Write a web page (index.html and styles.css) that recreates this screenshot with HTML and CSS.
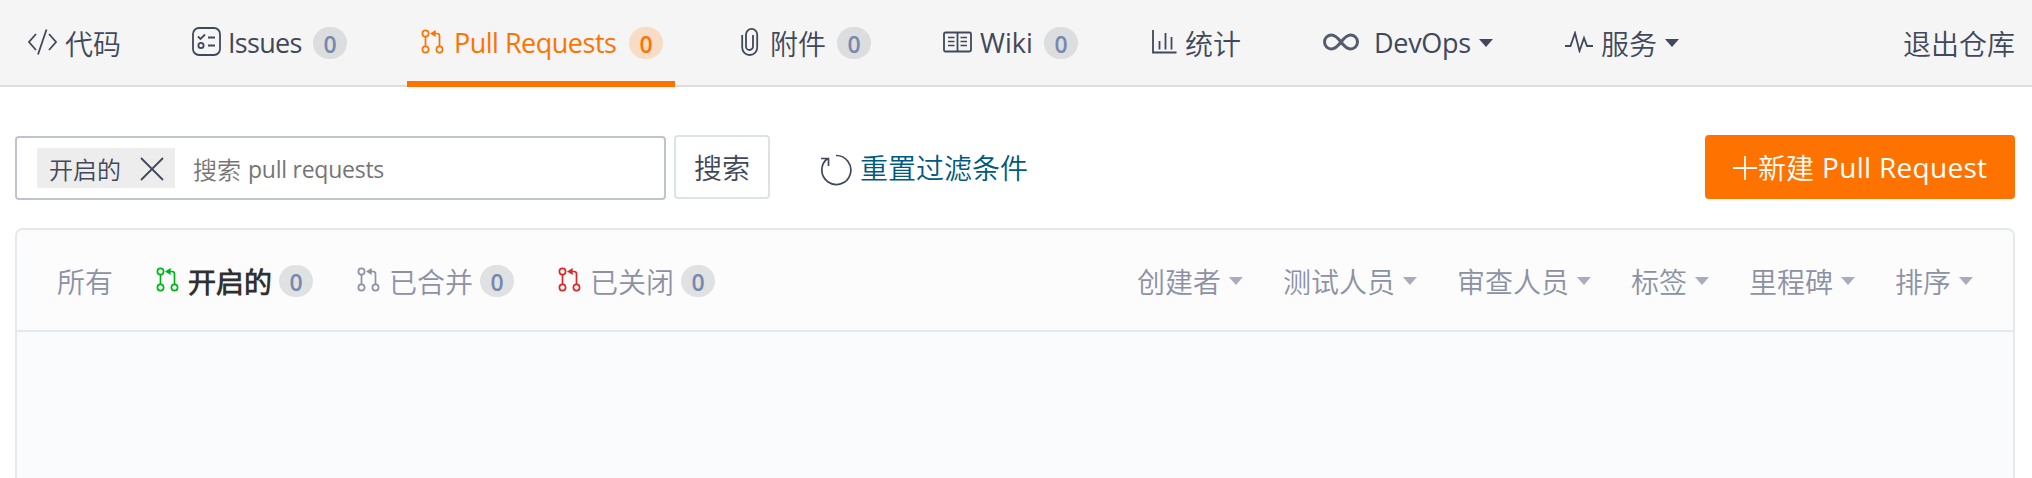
FILE: index.html
```html
<!DOCTYPE html>
<html lang="zh-CN">
<head>
<meta charset="utf-8">
<title>Pull Requests</title>
<link rel="stylesheet" href="styles.css">
</head>
<body>
<svg class="defs" width="0" height="0">
  <symbol id="pr" viewBox="0 0 24 26">
    <g fill="none" stroke="currentColor" stroke-width="1.7"><circle cx="4.5" cy="4.5" r="3.1"/><circle cx="4.5" cy="20.5" r="3.1"/><circle cx="18.5" cy="20.5" r="3.1"/><path d="M4.500 7.600V17.400M18.500 17.400V7Q18.500 4.500 16 4.500H12"/></g>
    <path d="M9 4.500L14.700 1V8Z" fill="currentColor"/>
  </symbol>
</svg>
<nav class="nav">
  <a class="item code"><svg width="29" height="28" viewBox="0 0 29 28"><path d="M8 6L1 14L8 22M21 6L28 14L21 22M18.500 1.500L10 26.500"/></svg><span>代码</span></a>
  <a class="item issues"><svg width="29" height="29" viewBox="0 0 29 29"><rect x="1" y="1" width="27" height="27" rx="6"/><path d="M6 9.500L8.500 12L13 7.500M16 10.500H23M16 18.500H23"/><circle cx="9" cy="18.500" r="2.600"/></svg><span class="latin w-issues">Issues</span><b class="badge">0</b></a>
  <a class="item pulls active"><svg class="pr" width="24" height="26"><use href="#pr"/></svg><span class="latin w-pulls">Pull Requests</span><b class="badge">0</b></a>
  <a class="item files"><svg width="18" height="29" viewBox="0 0 18 29"><path d="M1.200 8V20.500A7.500 7.500 0 0 0 16.200 20.500V7.500A5.600 5.600 0 0 0 5 7.500V19.500A3.500 3.500 0 0 0 12 19.500V8"/></svg><span>附件</span><b class="badge">0</b></a>
  <a class="item wiki"><svg width="29" height="22" viewBox="0 0 29 22"><rect x="1" y="1.500" width="27" height="19" rx="1.500"/><path d="M14.500 2V20"/><path class="thin" d="M5 6.500H11.500M5 10.500H11.500M5 14.500H11.500M17.500 6.500H24M17.500 10.500H24M17.500 14.500H24"/></svg><span class="latin w-wiki">Wiki</span><b class="badge">0</b></a>
  <a class="item stats"><svg width="25" height="25" viewBox="0 0 25 25"><path d="M1 1V23.500H24.500M7.500 20.500V12M13.500 20.500V4M19.500 20.500V8"/></svg><span>统计</span></a>
  <a class="item devops"><svg class="infinity" width="36" height="18" viewBox="0 0 36 18"><path d="M18 9C14.500 4.500 12 2 8.500 2A7 7 0 0 0 8.500 16C12 16 14.500 13.500 18 9S24 2 27.500 2A7 7 0 0 1 27.500 16C24 16 21.500 13.500 18 9Z"/></svg><span class="latin w-devops">DevOps</span><i class="caret"></i></a>
  <a class="item service"><svg width="28" height="22" viewBox="0 0 28 22"><path d="M0 15H5.500L10 2L14.500 20L19 7L22 15H28"/></svg><span>服务</span><i class="caret"></i></a>
  <a class="item leave">退出仓库</a>
</nav>

<main>
  <div class="toolbar">
    <div class="search">
      <span class="tag">开启的<svg width="24" height="24" viewBox="0 0 24 24"><path d="M1 1L23 23M23 1L1 23"/></svg></span>
      <span class="placeholder">搜索 <span class="latin w-ph">pull requests</span></span>
    </div>
    <button class="btn">搜索</button>
    <a class="reset"><svg width="32" height="32" viewBox="0 0 32 32"><path d="M16 1.500A14.500 14.500 0 1 1 7.500 4.500M1 4.500H8.500V12"/></svg><span>重置过滤条件</span></a>
    <button class="create"><svg width="26" height="26" viewBox="0 0 26 26"><path d="M1 13H25M13 1V25"/></svg><span>新建</span><span class="latin w-create">Pull Request</span></button>
  </div>

  <section class="panel">
    <header class="filters">
      <div class="states">
        <a class="all">所有</a>
        <a class="state open"><svg class="pr green" width="24" height="26"><use href="#pr"/></svg><span>开启的</span><b class="badge">0</b></a>
        <a class="state"><svg class="pr" width="24" height="26"><use href="#pr"/></svg><span>已合并</span><b class="badge">0</b></a>
        <a class="state"><svg class="pr red" width="24" height="26"><use href="#pr"/></svg><span>已关闭</span><b class="badge">0</b></a>
      </div>
      <div class="menus">
        <a>创建者<i class="caret"></i></a>
        <a>测试人员<i class="caret"></i></a>
        <a>审查人员<i class="caret"></i></a>
        <a>标签<i class="caret"></i></a>
        <a>里程碑<i class="caret"></i></a>
        <a>排序<i class="caret"></i></a>
      </div>
    </header>
  </section>
</main>
</body>
</html>
```
FILE: styles.css
```css
* { box-sizing: border-box; }
body {
  margin: 0;
  height: 478px;
  overflow: hidden;
  display: flex;
  flex-direction: column;
  background: #fff;
  color: #40485b;
  font: 350 28px/40px "Noto Sans CJK SC DemiLight", "Noto Sans CJK SC", sans-serif;
  white-space: nowrap;
}
.defs { position: absolute; }
svg { flex: none; fill: none; stroke: currentColor; stroke-width: 1.8; }
.pr { stroke: none; }
.latin { font-family: "Open Sans", "Noto Sans CJK SC", sans-serif; font-size: 27px; font-weight: 400; letter-spacing: -0.5px; }

.nav {
  flex: none;
  height: 87px;
  display: flex;
  background: #f5f5f5;
  border-bottom: 2px solid #dcdddd;
}
.item { height: 87px; padding-bottom: 1px; display: flex; align-items: center; flex: none; }
.item svg { margin-bottom: 3px; }
.code { width: 164px; margin-left: 28px; gap: 8px; }
.issues { width: 215px; gap: 7px; }
.pulls { width: 268px; padding-left: 14px; gap: 9px; }
.pulls.active { color: #fe7300; border-bottom: 6px solid #fe7300; padding-bottom: 0; }
.pulls.active > * { position: relative; top: 2px; }
.pulls.active > svg { top: 3px; }
.files { width: 202px; margin-left: 66px; gap: 11px; }
.wiki { width: 209px; gap: 8px; }
.stats { width: 171px; gap: 8px; }
.devops { width: 242px; gap: 8px; }
.devops .latin { margin-left: 7px; }
.devops .latin { letter-spacing: -0.3px; }
.service { gap: 8px; }
.leave { margin-left: auto; margin-right: 17px; }
.infinity { stroke-width: 3; opacity: .88; }
.thin { stroke-width: 1.6; }
.w-issues { width: 74px; letter-spacing: -0.7px; }
.w-pulls { width: 166px; }
.w-wiki { width: 54px; letter-spacing: 0; }
.w-devops { width: 97px; }

.badge {
  flex: none;
  width: 34px;
  height: 32px;
  border-radius: 17px;
  background: #dcdddf;
  color: #7888ad;
  font: 600 23px/34px "Open Sans", sans-serif;
  text-align: center;
}
.issues .badge { margin-left: 4px; }
.wiki .badge { margin-left: 2px; }
.active .badge { background: #f8dcc6; color: #fe7300; }
.caret { flex: none; width: 14px; height: 8px; background: currentColor; clip-path: polygon(0 0, 100% 0, 50% 100%); }

main { flex: 1; padding: 48px 17px 0 15px; display: flex; flex-direction: column; }
.toolbar { display: flex; height: 65px; align-items: flex-start; }
.search {
  width: 651px;
  height: 64px;
  margin-top: 1px;
  padding-left: 20px;
  display: flex;
  align-items: center;
  border: 2px solid #c0c4cf;
  border-radius: 4px;
  font-size: 24px;
}
.tag { width: 138px; height: 40px; padding: 2px 11px 0 12px; display: flex; align-items: center; justify-content: space-between; background: #ededed; }
.placeholder { margin-left: 18px; padding-top: 2px; color: #757575; display: flex; gap: 7px; }
.placeholder .latin { font-size: 23px; letter-spacing: -0.25px; }
button { height: 64px; padding: 0; border-radius: 4px; font: inherit; color: inherit; }
.btn { width: 96px; margin-left: 8px; background: #fff; border: 2px solid #dce3e8; }
.reset { height: 64px; margin-left: 50px; display: flex; align-items: center; gap: 8px; }
.reset svg { margin-top: 5px; stroke-width: 1.7; }
.reset span { color: #005980; }
.create { width: 310px; margin-left: auto; padding-left: 27px; display: flex; align-items: center; border: 0; background: #fe7300; color: #fff; font-weight: 400; }
.create svg { margin-top: 1px; }
.create .latin { margin-left: 8px; font-size: 28px; font-weight: 400; letter-spacing: 0.3px; }

.panel { flex: 1; margin-top: 28px; border: 2px solid #e3e9ed; border-bottom: 0; border-radius: 8px 8px 0 0; background: #fafbfd; overflow: hidden; }
.filters { height: 102px; padding: 2px 40px 0; display: flex; align-items: center; justify-content: space-between; background: #fcfcfc; border-bottom: 2px solid #e3e9ed; color: #8c92a4; }
.states, .menus { display: flex; align-items: center; }
.states { gap: 43px; }
.menus { gap: 40px; }
.menus a { display: flex; align-items: center; gap: 8px; }
.menus .caret { background: #a9acbc; }
.state { display: flex; align-items: center; width: 158px; }
.state span { margin-left: 8px; }
.state .badge { margin-left: 7px; background: #e0e1e3; }
.state svg { margin-bottom: 2px; }
.open span { color: #303030; font-weight: 700; }
.green { color: #00b31d; }
.red { color: #db2828; }
```
